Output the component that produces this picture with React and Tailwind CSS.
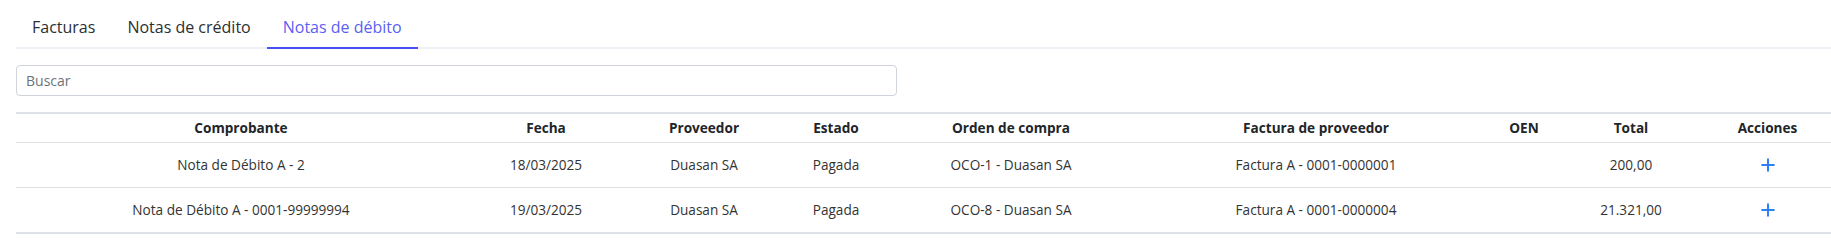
import React, { useState } from 'react';
import { Plus } from 'lucide-react';

const tabs = ['Facturas', 'Notas de crédito', 'Notas de débito'];

const rows = [
  {
    comprobante: 'Nota de Débito A - 2',
    fecha: '18/03/2025',
    proveedor: 'Duasan SA',
    estado: 'Pagada',
    orden: 'OCO-1 - Duasan SA',
    factura: 'Factura A - 0001-0000001',
    oen: '',
    total: '200,00',
  },
  {
    comprobante: 'Nota de Débito A - 0001-99999994',
    fecha: '19/03/2025',
    proveedor: 'Duasan SA',
    estado: 'Pagada',
    orden: 'OCO-8 - Duasan SA',
    factura: 'Factura A - 0001-0000004',
    oen: '',
    total: '21.321,00',
  },
];

export default function App() {
  const [active, setActive] = useState(2);
  const [query, setQuery] = useState('');

  return (
    <div className="min-h-screen bg-white pl-4 text-[#212529] font-['Open_Sans',sans-serif]">
      <div className="flex border-b-2 border-[#eef0f5]">
        {tabs.map((t, i) => (
          <button
            key={t}
            onClick={() => setActive(i)}
            className={`-mb-[2px] px-4 pt-[15px] pb-[8px] text-base leading-6 border-b-2 ${
              i === active ? 'text-[#5b5ff2] border-[#4651f0]' : 'text-[#2b2f33] border-transparent'
            }`}
          >
            {t}
          </button>
        ))}
      </div>

      <input
        type="text"
        placeholder="Buscar"
        value={query}
        onChange={(e) => setQuery(e.target.value)}
        className="mt-4 block w-[881px] h-[31px] px-[9px] rounded border border-[#ced4da] text-sm text-[#212529] placeholder:text-[#6c737d] focus:outline-none"
      />

      <table className="mt-4 w-full border-collapse text-[13.6px] leading-5 table-fixed">
        <colgroup>
          <col className="w-[450px]" />
          <col className="w-[160px]" />
          <col className="w-[156px]" />
          <col className="w-[108px]" />
          <col className="w-[242px]" />
          <col className="w-[368px]" />
          <col className="w-[48px]" />
          <col className="w-[166px]" />
          <col />
        </colgroup>
        <thead>
          <tr className="border-t-2 border-b border-[#dee2e6]">
            <th className="py-1 font-bold">Comprobante</th>
            <th className="py-1 font-bold">Fecha</th>
            <th className="py-1 font-bold">Proveedor</th>
            <th className="py-1 font-bold">Estado</th>
            <th className="py-1 font-bold">Orden de compra</th>
            <th className="py-1 font-bold">Factura de proveedor</th>
            <th className="py-1 font-bold">OEN</th>
            <th className="py-1 font-bold">Total</th>
            <th className="py-1 pl-2 pr-[18px] font-bold">Acciones</th>
          </tr>
        </thead>
        <tbody className="text-[#333]">
          {rows.map((r, i) => (
            <tr
              key={r.comprobante}
              className={`border-[#dee2e6] ${i === rows.length - 1 ? 'border-b-2' : 'border-b'}`}
            >
              <td className="py-3 text-center">{r.comprobante}</td>
              <td className="py-3 text-center">{r.fecha}</td>
              <td className="py-3 text-center">{r.proveedor}</td>
              <td className="py-3 text-center">{r.estado}</td>
              <td className="py-3 text-center">{r.orden}</td>
              <td className="py-3 text-center">{r.factura}</td>
              <td className="py-3 text-center">{r.oen}</td>
              <td className="py-3 text-center">{r.total}</td>
              <td className="py-3 pl-2 pr-[18px]">
                <button className="mx-auto flex h-5 items-center justify-center text-[#2f7ff7]">
                  <Plus size={20} strokeWidth={2.4} />
                </button>
              </td>
            </tr>
          ))}
        </tbody>
      </table>
    </div>
  );
}
